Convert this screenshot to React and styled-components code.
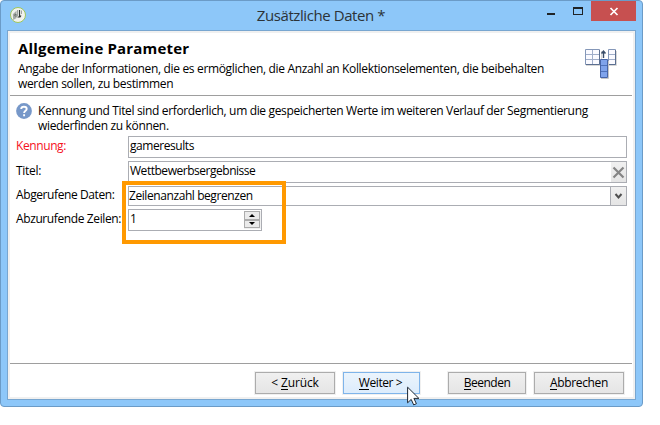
import React from "react";
import styled, { createGlobalStyle } from "styled-components";

const GlobalStyle = createGlobalStyle`
  * { box-sizing: border-box; }
  body { margin: 0; background: #fff; color: #000; font: 12px/15px "Open Sans", "Noto Sans", sans-serif; }
  button { font: inherit; color: inherit; padding: 0; }
`;

const Window = styled.main`
  position: relative;
  display: flex;
  flex-direction: column;
  width: 643px;
  height: 407px;
  padding: 0 6px 6px;
  background: #8dc7f9;
  border: 1px solid #6b9bc7;
  border-radius: 4px;
`;

const TitleBar = styled.header`
  display: grid;
  grid-template-columns: 80px 1fr 80px;
  height: 29px;
  flex: none;
  align-items: start;
`;

const AppIcon = styled.svg`
  width: 18px;
  height: 18px;
  margin: 5px 0 0 2px;
`;

const WindowTitle = styled.h1`
  margin: 4px 1px 0 0;
  text-align: center;
  white-space: nowrap;
  font-size: 15px;
  line-height: 20px;
  font-weight: 400;
  letter-spacing: -0.42px;
  color: #2c3338;
`;

const WindowControls = styled.div`
  display: flex;
  justify-content: flex-end;
  height: 20px;
`;

const ControlButton = styled.button`
  width: ${({ $close }) => ($close ? 45 : 27)}px;
  height: 20px;
  flex: none;
  border: 0;
  background: ${({ $close }) => ($close ? "#c75050" : "transparent")};
  svg { display: block; }
`;

const Client = styled.section`
  display: flex;
  flex-direction: column;
  flex: 1;
  border: 1px solid #78a6d0;
  background: #f0f0f0;
  padding: 2px;
`;

const Page = styled.div`
  display: flex;
  flex-direction: column;
  flex: 1;
  background: #fff;
`;

const Heading = styled.div`
  display: flex;
  justify-content: space-between;
  height: 63px;
  margin-right: 1px;
  padding: 5px 14px 0 8px;
  border-bottom: 1px solid #9e9e9e;
`;

const HeadingTitle = styled.h2`
  margin: 0 0 3px;
  font-size: 15px;
  line-height: 20px;
  font-weight: 700;
  letter-spacing: 0.17px;
`;

const Text = styled.span`
  display: block;
  white-space: nowrap;
  letter-spacing: ${({ $spacing = -0.38 }) => $spacing}px;
`;

const HeadingIcon = styled.svg`
  width: 34px;
  height: 32px;
  margin-top: 10px;
  flex: none;
`;

const Hint = styled.div`
  display: flex;
  gap: 6px;
  height: 40px;
  padding: 7px 0 0 6px;
`;

const HintIcon = styled.svg`
  width: 16px;
  height: 16px;
`;

const Form = styled.div`
  display: grid;
  grid-template-columns: 112px 499px;
  grid-template-rows: 22px 22px 20px 22px;
  row-gap: 3px;
  margin-left: 6px;
`;

const Label = styled.label`
  padding-top: ${({ $top = 2 }) => $top}px;
  white-space: nowrap;
  letter-spacing: ${({ $spacing = -0.4 }) => $spacing}px;
  color: ${({ $required }) => ($required ? "#f5101c" : "#000")};
`;

const Field = styled.div`
  display: flex;
  justify-content: space-between;
  width: ${({ $narrow }) => ($narrow ? "134px" : "100%")};
  padding-left: ${({ $combo }) => ($combo ? 0 : 1)}px;
  border: 1px solid #abadb3;
  background: #fff;
`;

const Value = styled(Text)`
  padding-top: 1px;
`;

const FieldButton = styled.button`
  width: ${({ $divided }) => ($divided ? 16 : 15)}px;
  border: 0;
  border-left: ${({ $divided }) => ($divided ? "1px solid #abadb3" : "0")};
  background: linear-gradient(#f0f0f0, #e5e5e5);
  svg { display: block; }
`;

const Stepper = styled.div`
  display: flex;
  flex-direction: column;
  width: 17px;
  margin: 1px 0;
  padding-right: 1px;
  background: #f0f0f0;
`;

const StepButton = styled.button`
  display: flex;
  align-items: center;
  justify-content: center;
  height: 9px;
  margin-bottom: ${({ $up }) => ($up ? 0 : 1)}px;
  flex: 1;
  border: 1px solid #acacac;
  background: #ebebeb;
`;

const Footer = styled.footer`
  display: flex;
  height: 34px;
  margin: auto 1px 0 0;
  padding: 8px 8px 0 0;
  justify-content: flex-end;
  border-top: 1px solid #9e9e9e;
`;

const FooterButton = styled.button`
  width: ${({ $width }) => $width}px;
  height: 22px;
  margin-left: ${({ $gap = 0 }) => $gap}px;
  padding-right: ${({ $active }) => ($active ? 2 : 0)}px;
  border: 1px solid ${({ $active }) => ($active ? "#7eb4ea" : "#acacac")};
  background: ${({ $active }) => ($active ? "linear-gradient(#ebf4fc, #dcecfc)" : "linear-gradient(#f0f0f0, #e5e5e5)")};
  box-shadow: 0 0 0 1px #f0f0f0;
  line-height: 20px;
  letter-spacing: ${({ $spacing }) => $spacing}px;
  white-space: nowrap;
`;

const Key = styled.span`
  display: inline-block;
  height: 16px;
  border-bottom: 1px solid #000;
  line-height: 18px;
  vertical-align: top;
  margin-top: 1px;
`;

const Highlight = styled.div`
  position: absolute;
  left: 121px;
  top: 180px;
  width: 164px;
  height: 63px;
  border: 4px solid #ff9900;
`;

const Cursor = styled.svg`
  position: absolute;
  left: 406px;
  top: 385px;
  width: 13px;
  height: 20px;
`;

export default function App() {
  return (
    <>
      <GlobalStyle />
      <Window>
        <TitleBar>
          <AppIcon viewBox="0 0 18 18">
            <circle cx="9" cy="9" r="7.5" fill="#f1f2ee" stroke="#9fc75a" />
            <path d="M3.8 8.2 7.5 4.8V12L4.2 14z" fill="#a4a9a4" />
            <path d="M5 9.5 7 8v3" fill="none" stroke="#6a706c" />
            <path d="M10.5 4v7M8.5 11h2.5l1-1.5" fill="none" stroke="#303532" strokeWidth="1.2" />
            <path d="M8.5 4v6M12.5 4.5v3.5" stroke="#a0a5a2" />
          </AppIcon>
          <WindowTitle>Zusätzliche Daten *</WindowTitle>
          <WindowControls>
            <ControlButton aria-label="Minimieren">
              <svg width="27" height="20"><path d="M10 12h8v2h-8z" fill="#1f2326" /></svg>
            </ControlButton>
            <ControlButton aria-label="Maximieren">
              <svg width="27" height="20"><path fillRule="evenodd" d="M9 6h10v8H9zM10 8v5h8V8z" fill="#1f2326" /></svg>
            </ControlButton>
            <ControlButton $close aria-label="Schließen">
              <svg width="45" height="20"><path d="M19.5 7 26.5 14M26.5 7 19.5 14" stroke="#fff" strokeWidth="1.7" /></svg>
            </ControlButton>
          </WindowControls>
        </TitleBar>
        <Client>
          <Page>
            <Heading>
              <div>
                <HeadingTitle>Allgemeine Parameter</HeadingTitle>
                <Text $spacing={-0.336}>
                  Angabe der Informationen, die es ermöglichen, die Anzahl an Kollektionselementen, die beibehalten
                  <br />
                  werden sollen, zu bestimmen
                </Text>
              </div>
              <HeadingIcon viewBox="0 0 34 32">
                <path d="M2 17.5h15.5V3M25 17.5h7.5V3" fill="none" stroke="#d8d8d8" />
                <path d="M1.5 1.5h14v15h-14zM24.5 1.5h7v15h-7z" fill="#fafaff" stroke="#8497b8" />
                <path d="M8.5 2v14M2 6.5h13M2 11.5h13M25 6.5h6M25 11.5h6" stroke="#a0aeca" />
                <path d="M15.5 2v14.5H2M31.5 2v14.5h-7" fill="none" stroke="#5b6f91" />
                <path d="M19.5 10V3M17.5 5.5 19.5 3l2 2.5" fill="none" stroke="#394d69" strokeWidth="1.4" />
                <path d="M17 30.5h7.5V13" fill="none" stroke="#c6c6c6" />
                <path d="M16.5 11.5h7v18h-7z" fill="#7fa3eb" stroke="#4665a8" />
                <path d="M17 17.5h6M17 23.5h6" stroke="#4f72ba" />
              </HeadingIcon>
            </Heading>
            <Hint>
              <HintIcon viewBox="0 0 16 16">
                <circle cx="8" cy="8" r="7.9" fill="#7798c9" />
                <path d="M5.2 6C5.3 3 10.7 3 10.7 6c0 1.8-2.6 1.8-2.6 4M8.1 11.2v2" fill="none" stroke="#fff" strokeWidth="1.9" />
              </HintIcon>
              <Text $spacing={-0.345}>
                Kennung und Titel sind erforderlich, um die gespeicherten Werte im weiteren Verlauf der Segmentierung
                <br />
                wiederfinden zu können.
              </Text>
            </Hint>
            <Form>
              <Label $required>Kennung:</Label>
              <Field><Value $spacing={-0.44}>gameresults</Value></Field>
              <Label $spacing={-0.3}>Titel:</Label>
              <Field>
                <Value $spacing={-0.47}>Wettbewerbsergebnisse</Value>
                <FieldButton aria-label="Leeren">
                  <svg width="15" height="20"><path d="m2.5 5.5 10 10m0-10-10 10" stroke="#858585" strokeWidth="2.2" /></svg>
                </FieldButton>
              </Field>
              <Label $top={1} $spacing={-0.4}>Abgerufene Daten:</Label>
              <Field $combo>
                <Value $spacing={-0.42}>Zeilenanzahl begrenzen</Value>
                <FieldButton $divided aria-label="Öffnen">
                  <svg width="15" height="18"><path d="m4.5 7 3 3.5 3-3.5" fill="none" stroke="#505050" strokeWidth="2" /></svg>
                </FieldButton>
              </Field>
              <Label $spacing={-0.39}>Abzurufende Zeilen:</Label>
              <Field $narrow>
                <Value>1</Value>
                <Stepper>
                  <StepButton $up aria-label="Mehr">
                    <svg width="6" height="3"><path d="M0 3 3 0l3 3z" /></svg>
                  </StepButton>
                  <StepButton aria-label="Weniger">
                    <svg width="6" height="3"><path d="M0 0h6L3 3z" /></svg>
                  </StepButton>
                </Stepper>
              </Field>
            </Form>
            <Footer>
              <FooterButton $width={80} $spacing={-0.12}>&lt; <Key>Z</Key>urück</FooterButton>
              <FooterButton $width={77} $gap={8} $spacing={-0.42} $active><Key>W</Key>eiter &gt;</FooterButton>
              <FooterButton $width={78} $gap={28} $spacing={-0.5}><Key>B</Key>eenden</FooterButton>
              <FooterButton $width={90} $gap={8} $spacing={-0.34}><Key>A</Key>bbrechen</FooterButton>
            </Footer>
          </Page>
        </Client>
        <Highlight />
        <Cursor viewBox="0 0 13 20">
          <path d="M.6 1.2v15.6l3.6-3.4 2.5 5.5 2.7-1.2-2.5-5.3h5z" fill="#fff" stroke="#1c2530" />
        </Cursor>
      </Window>
    </>
  );
}
